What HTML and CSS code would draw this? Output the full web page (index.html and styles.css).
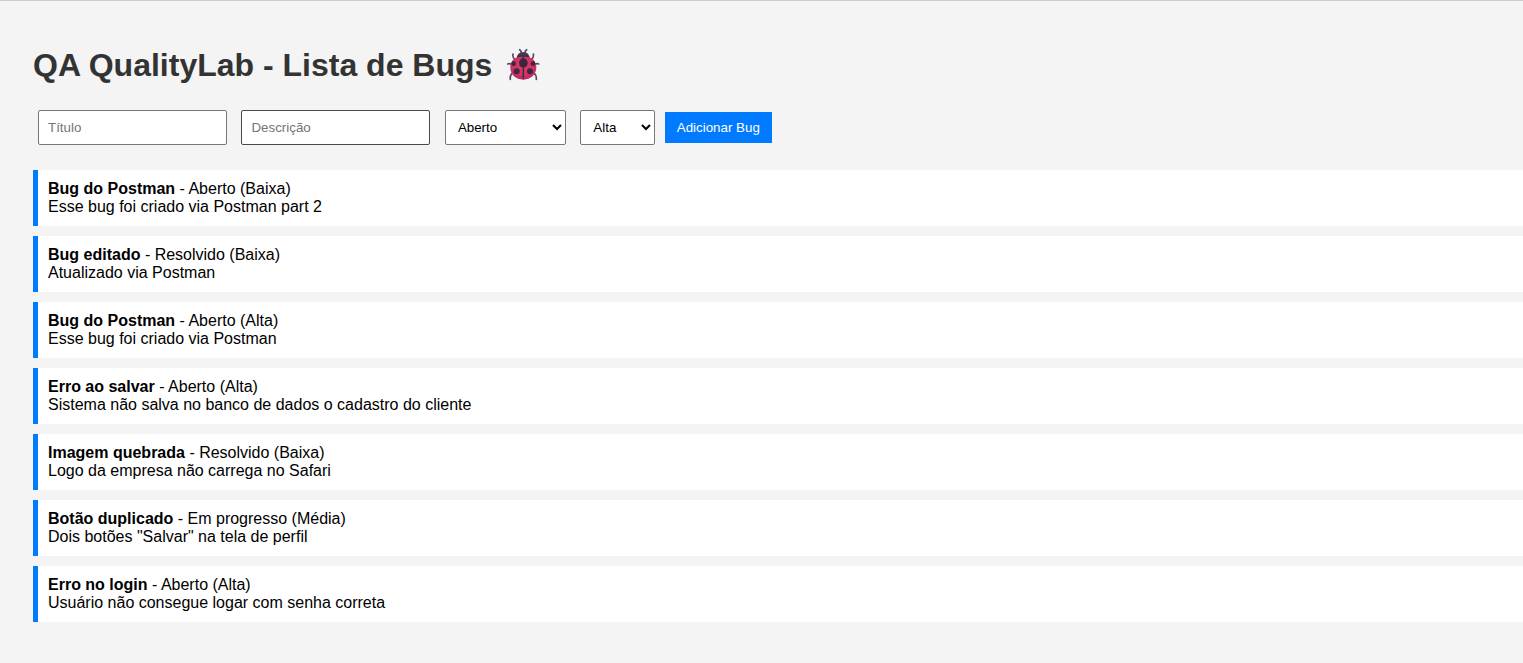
FILE: index.html
```html
<!DOCTYPE html>
<html lang="pt-BR">
<head>
<meta charset="utf-8">
<title>QA QualityLab</title>
<link rel="stylesheet" href="styles.css">
</head>
<body>
<main class="page">
<h1 class="title">QA QualityLab - Lista de Bugs
<svg class="ladybug" viewBox="36 24 99 99" aria-hidden="true">
<defs>
<radialGradient id="shell" cx="0.5" cy="0.4" r="0.65"><stop offset="0" stop-color="#e63a5c"/><stop offset="0.6" stop-color="#d23262"/><stop offset="1" stop-color="#b02866"/></radialGradient>
<linearGradient id="head" x1="0" y1="0" x2="0" y2="1"><stop offset="0" stop-color="#4c455c"/><stop offset="1" stop-color="#2d2638"/></linearGradient>
</defs>
<g fill="none" stroke="#5a4768" stroke-width="5" stroke-linecap="round" stroke-linejoin="round">
<path d="M79 38Q79 32 74 29M90 38Q90 32 95 29"/>
<path d="M60 58Q52 54 54 42M109 58Q117 54 115 42M52 76Q46 69 38 72M117 76Q123 69 131 72M54 98Q44 104 46 118M115 98Q125 104 124 118"/>
</g>
<path fill="url(#head)" d="M64 58Q66 36 85 36Q103 36 105 58Z"/>
<path fill="url(#shell)" d="M85 51C108 48 124 61 124 82C124 104 107 119 85 119C62 119 46 104 46 82C46 61 62 48 85 51Z"/>
<g fill="#3c2643">
<ellipse cx="85" cy="69" rx="13" ry="14"/>
<ellipse cx="56" cy="71" rx="7" ry="7"/><ellipse cx="114" cy="71" rx="7" ry="7"/>
<circle cx="65" cy="94" r="9"/><circle cx="105" cy="94" r="9"/>
<path d="M83 52h4v61l-2 6-2-6z"/>
</g>
</svg></h1>
<form class="bug-form">
<input class="field" type="text" placeholder="Título" aria-label="Título">
<input class="field field-active" type="text" placeholder="Descrição" aria-label="Descrição">
<select class="field" aria-label="Status"><option>Aberto</option><option>Em progresso</option><option>Resolvido</option></select>
<select class="field" aria-label="Prioridade"><option>Alta</option><option>Média</option><option>Baixa</option></select>
<button class="add" type="button">Adicionar Bug</button>
</form>
<ul class="bugs">
<li class="bug"><strong>Bug do Postman</strong> - Aberto (Baixa)<br>Esse bug foi criado via Postman part 2</li>
<li class="bug"><strong>Bug editado</strong> - Resolvido (Baixa)<br>Atualizado via Postman</li>
<li class="bug"><strong>Bug do Postman</strong> - Aberto (Alta)<br>Esse bug foi criado via Postman</li>
<li class="bug"><strong>Erro ao salvar</strong> - Aberto (Alta)<br>Sistema não salva no banco de dados o cadastro do cliente</li>
<li class="bug"><strong>Imagem quebrada</strong> - Resolvido (Baixa)<br>Logo da empresa não carrega no Safari</li>
<li class="bug"><strong>Botão duplicado</strong> - Em progresso (Média)<br>Dois botões "Salvar" na tela de perfil</li>
<li class="bug"><strong>Erro no login</strong> - Aberto (Alta)<br>Usuário não consegue logar com senha correta</li>
</ul>
</main>
</body>
</html>
```
FILE: styles.css
```css
body {
  margin: 0;
  border-top: 1px solid #ccc;
  background: #f4f4f4;
  font-family: Arial, "Liberation Sans", sans-serif;
  font-size: 16px;
  line-height: 18px;
}

.page {
  padding: 46px 0 31px 33px;
}

.title {
  margin: 0 0 21px;
  color: #333;
  font-size: 32px;
  line-height: 37px;
}

.ladybug {
  width: 33px;
  height: 33px;
  margin-left: 6px;
  vertical-align: -5px;
}

.field {
  box-sizing: border-box;
  height: 35px;
  margin: 5px;
  padding: 8px;
  border: 1px solid #767676;
  border-radius: 2px;
  background-color: #fff;
  color: #000;
  font-family: Arial, "Liberation Sans", sans-serif;
}

input.field {
  width: 189px;
  padding: 9px;
}

.field-active {
  border-color: #4a4a4a;
}

.field::placeholder {
  color: #757575;
}

.add {
  padding: 8px 12px;
  border: 0;
  background: #007bff;
  color: #fff;
  font-family: Arial, "Liberation Sans", sans-serif;
  line-height: 15px;
  cursor: pointer;
}

.bugs {
  display: grid;
  gap: 10px;
  margin: 20px 0 0;
  padding: 0;
  list-style: none;
}

.bug {
  padding: 10px;
  border-left: 5px solid #007bff;
  background: #fff;
}
```
